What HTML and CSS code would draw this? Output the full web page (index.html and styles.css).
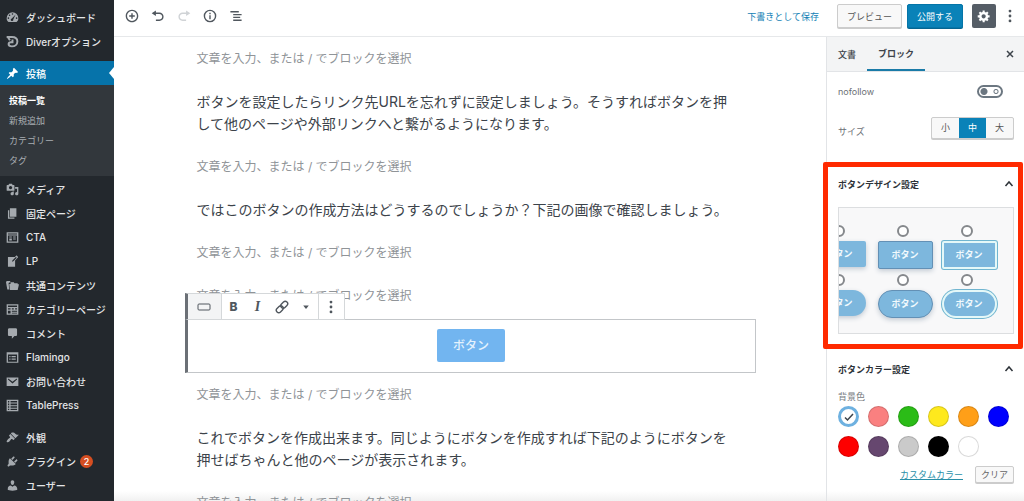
FILE: index.html
```html
<!DOCTYPE html>
<html lang="ja">
<head>
	<meta charset="UTF-8">
	<meta name="viewport" content="width=device-width, initial-scale=1">
	<title>投稿の編集</title>
	<link rel="stylesheet" href="styles.css">
</head>
<body>
	<nav class="sidebar">
		<ul class="menu">
			<li><a href="#"><svg viewBox="0 0 20 20"><path fill-rule="evenodd" d="M3.8 17C2.100 15.500 1 13.400 1 11a9 9 0 0 1 18 0c0 2.400-1.100 4.500-2.800 6zM10 3.500a1.200 1.200 0 1 0 0 2.400 1.200 1.200 0 0 0 0-2.400zM5.500 5.300a1.200 1.200 0 1 0 0 2.400 1.200 1.200 0 0 0 0-2.400zM3.700 9.800a1.200 1.200 0 1 0 0 2.400 1.200 1.200 0 0 0 0-2.400zM16.300 9.800a1.200 1.200 0 1 0 0 2.400 1.200 1.200 0 0 0 0-2.400zM14.800 5.500L9 11.500a2 2 0 1 0 2.200 1.500z"/></svg>ダッシュボード</a></li>
			<li><a href="#"><svg viewBox="0 0 20 20"><path class="line-thick" d="M1 3h8c5.500 0 8.500 2.500 8.500 7S14 17.500 9 17.500c-3 0-5-1.500-5-3.500s1.500-3 3.500-3H10V7M3 3.500l3 4.500"/></svg>Diverオプション</a></li>
		</ul>
		<ul class="menu">
			<li class="current"><a href="#"><svg viewBox="0 0 20 20"><path d="M10.440 3.020l1.820-1.820 6.360 6.350-1.830 1.820c-1.050-.68-2.480-.57-3.410.36l-.75.75c-.92.93-1.040 2.350-.35 3.410l-1.830 1.820-2.410-2.410-2.800 2.790c-.42.42-3.380 2.710-3.800 2.290s1.860-3.390 2.280-3.810l2.790-2.790L4.100 9.360l1.830-1.820c1.050.69 2.480.57 3.400-.36l.75-.75c.93-.92 1.050-2.350.36-3.410z"/></svg>投稿</a>
				<ul class="submenu">
					<li><a class="here" href="#">投稿一覧</a></li>
					<li><a href="#">新規追加</a></li>
					<li><a href="#">カテゴリー</a></li>
					<li><a href="#">タグ</a></li>
				</ul>
			</li>
			<li><a href="#"><svg viewBox="0 0 20 20"><path d="M13 11V4c0-.55-.45-1-1-1h-1.670L9 1H5L3.670 3H2c-.55 0-1 .45-1 1v7c0 .55.45 1 1 1h10c.55 0 1-.45 1-1zM7 4.500c1.380 0 2.500 1.120 2.500 2.500S8.380 9.500 7 9.500 4.500 8.380 4.500 7 5.620 4.500 7 4.500zM14 6h5v10.500c0 1.380-1.120 2.500-2.500 2.500S14 17.880 14 16.500s1.120-2.500 2.500-2.500c.17 0 .34.02.5.05V9h-3V6zm-4 8.050V13h2v3.500c0 1.380-1.120 2.500-2.500 2.500S7 17.880 7 16.500 8.120 14 9.500 14c.17 0 .34.02.5.05z"/></svg>メディア</a></li>
			<li><a href="#"><svg viewBox="0 0 20 20"><path d="M6 15V2h10v13H6zm-1 1h8v2H3V5h2v11z"/></svg>固定ページ</a></li>
			<li><a href="#"><svg viewBox="0 0 20 20"><path fill-rule="evenodd" d="M1 2h18v16H1zm2 2v1.500h14V4zm0 3v9h14V7zm2 1.500h4V10H5zm6 0h4V10h-4zM5 11.500h4v3H5zm6 0h4V13h-4z"/></svg>CTA</a></li>
			<li><a href="#"><svg viewBox="0 0 20 20"><path d="M16.890 1.200l1.410 1.410c.39.39.39 1.020 0 1.410L14 8.330V18H3V3h10.670l1.800-1.800c.4-.39 1.030-.4 1.420 0zm-5.660 8.480l5.370-5.360-1.420-1.420-5.360 5.370-.71 2.120z"/></svg>LP</a></li>
			<li><a href="#"><svg viewBox="0 0 20 20"><path d="M0 5l1-2h5l1 1.500L4 6l1 10H2zM5 7.500h2V5h5l1 1.500h5v1.500h2L18 17H6z"/></svg>共通コンテンツ</a></li>
			<li><a href="#"><svg viewBox="0 0 20 20"><path fill-rule="evenodd" d="M1 2h18v16H1zm2 2v2h14V4zm0 4v2h4V8zm6 0v2h3V8zm5 0v2h3V8zM3 12v4h4v-4zm6 0v1.500h8V12zm0 3v1h8v-1z"/></svg>カテゴリーページ</a></li>
			<li><a href="#"><svg viewBox="0 0 20 20"><path d="M5 2h10c1.100 0 2 .9 2 2v8c0 1.100-.9 2-2 2h-2l-4 4v-4H5c-1.100 0-2-.9-2-2V4c0-1.100.9-2 2-2z"/></svg>コメント</a></li>
			<li><a href="#"><svg viewBox="0 0 20 20"><path fill-rule="evenodd" d="M1 2h18v16H1zm2 3.500v11h14v-11zM5 7.500h2v2H5zm3.500 0H15v2H8.500zM5 11.500h2v2H5zm3.500 0H15v2H8.500z"/></svg>Flamingo</a></li>
			<li><a href="#"><svg viewBox="0 0 20 20"><path fill-rule="evenodd" d="M1 4h18v13H1zm2.500 1.500L3 7l7 6 7-6-.5-1.500L10 10.500z"/></svg>お問い合わせ</a></li>
			<li><a href="#"><svg viewBox="0 0 20 20"><path fill-rule="evenodd" d="M1 1h18v18H1zm2 2v2.500h2V3zm4 0v2.500h10V3zM3 7v2.500h2V7zm4 0v2.500h10V7zm-4 4v2.500h2V11zm4 0v2.500h10V11zm-4 4v2h2v-2zm4 0v2h10v-2z"/></svg>TablePress</a></li>
		</ul>
		<ul class="menu">
			<li><a href="#"><svg viewBox="0 0 20 20"><path d="M14.480 11.060L7.410 3.990l1.500-1.500c.5-.56 2.300-.47 3.510.32 1.210.8 1.430 1.280 2.910 2.100 1.180.64 2.450 1.260 4.450.85zm-.71.71L6.700 4.700 4.930 6.470c-.39.39-.39 1.020 0 1.410l1.060 1.060c.39.39.39 1.030 0 1.420-.6.6-1.430 1.110-2.210 1.690-.35.26-.7.53-1.010.84C1.430 14.230.4 16.080 1.400 17.070c.99 1 2.840-.03 4.180-1.360.31-.31.58-.66.85-1.020.57-.78 1.080-1.610 1.690-2.210.39-.39 1.020-.39 1.410 0l1.060 1.060c.39.39 1.020.39 1.410 0z"/></svg>外観</a></li>
			<li><a href="#"><svg viewBox="0 0 20 20"><path d="M13.110 4.360L9.870 7.600 8 5.730l3.240-3.240c.35-.34 1.050-.2 1.560.32.52.51.66 1.210.31 1.550zm-8 1.770l.91-1.120 9.010 9.010-1.190.84c-.71.71-2.630 1.160-3.820 1.160H6.140L4.900 17.260c-.59.59-1.540.59-2.120 0-.59-.58-.59-1.530 0-2.120l1.240-1.240v-3.880c0-1.130.4-3.190 1.090-3.890zm7.260 3.970l3.240-3.240c.34-.35 1.040-.21 1.550.31.52.51.66 1.210.31 1.550l-3.240 3.250z"/></svg>プラグイン<span class="count">2</span></a></li>
			<li><a href="#"><svg viewBox="0 0 20 20"><path d="M10 9.250c-2.270 0-2.730-3.440-2.730-3.440C7 4.020 7.820 2 9.970 2c2.160 0 2.980 2.020 2.710 3.810 0 0-.41 3.440-2.680 3.440zm0 2.570L12.720 10c2.390 0 4.520 2.330 4.520 4.530v2.490s-3.650 1.130-7.240 1.130c-3.650 0-7.240-1.130-7.240-1.130v-2.490c0-2.250 1.940-4.480 4.470-4.480z"/></svg>ユーザー</a></li>
		</ul>
	</nav>

	<div class="page">
		<header class="topbar">
			<div class="tools">
				<button type="button" aria-label="ブロックの追加"><svg viewBox="0 0 20 20"><path d="M10 1c-5 0-9 4-9 9s4 9 9 9 9-4 9-9-4-9-9-9zm0 16c-3.900 0-7-3.100-7-7s3.100-7 7-7 7 3.100 7 7-3.100 7-7 7zm1-11H9v3H6v2h3v3h2v-3h3V9h-3V6z"/></svg></button>
				<button type="button" aria-label="元に戻す"><svg viewBox="0 0 20 20"><path d="M12 5H7V2L1 6l6 4V7h5c2.200 0 4 1.800 4 4s-1.800 4-4 4H7v2h5c3.300 0 6-2.700 6-6s-2.700-6-6-6z"/></svg></button>
				<button type="button" aria-label="やり直す" disabled><svg viewBox="0 0 20 20"><path d="M8 5h5V2l6 4-6 4V7H8c-2.200 0-4 1.800-4 4s1.800 4 4 4h5v2H8c-3.300 0-6-2.700-6-6s2.700-6 6-6z"/></svg></button>
				<button type="button" aria-label="情報"><svg viewBox="0 0 20 20"><path fill-rule="evenodd" d="M10 1a9 9 0 1 0 0 18 9 9 0 0 0 0-18zm0 2a7 7 0 1 1 0 14 7 7 0 0 1 0-14zM9 5.500h2v2H9zM9 9h2v5.500H9z"/></svg></button>
				<button type="button" aria-label="ブロックナビゲーション"><svg viewBox="0 0 20 20"><path d="M2 3h12v2H2zM6 7h12v2H6zM6 11h10v2H6zM6 15h12v2H6z"/></svg></button>
			</div>
			<div class="actions">
				<a class="save" href="#">下書きとして保存</a>
				<button type="button" class="btn">プレビュー</button>
				<button type="button" class="btn primary">公開する</button>
				<button type="button" class="gear" aria-label="設定"><svg viewBox="0 0 20 20"><path d="M18 12h-2.180c-.17.7-.44 1.350-.81 1.930l1.540 1.540-2.100 2.100-1.540-1.540c-.58.36-1.230.63-1.910.79V19H8v-2.180c-.68-.16-1.330-.43-1.910-.79l-1.540 1.540-2.120-2.120 1.540-1.540c-.36-.58-.63-1.230-.79-1.910H1V9.030h2.170c.16-.7.44-1.350.8-1.940L2.430 5.550l2.100-2.100 1.540 1.540c.58-.37 1.240-.64 1.930-.81V2h3v2.180c.68.16 1.330.43 1.910.79l1.540-1.540 2.120 2.120-1.540 1.540c.36.59.64 1.240.8 1.940H18V12zm-8.500 1.500c1.660 0 3-1.340 3-3s-1.340-3-3-3-3 1.340-3 3 1.340 3 3 3z"/></svg></button>
				<button type="button" class="more" aria-label="ツールと設定"><svg viewBox="0 0 20 20"><circle cx="10" cy="3" r="2"/><circle cx="10" cy="10" r="2"/><circle cx="10" cy="17" r="2"/></svg></button>
			</div>
		</header>

		<div class="workspace">
			<main class="editor">
				<div class="blocks">
					<p class="prompt">文章を入力、または / でブロックを選択</p>
					<p>ボタンを設定したらリンク先URLを忘れずに設定しましょう。そうすればボタンを押して他のページや外部リンクへと繋がるようになります。</p>
					<p class="prompt">文章を入力、または / でブロックを選択</p>
					<p>ではこのボタンの作成方法はどうするのでしょうか？下記の画像で確認しましょう。</p>
					<p class="prompt">文章を入力、または / でブロックを選択</p>
					<p class="prompt">文章を入力、または / でブロックを選択</p>
					<div class="selected">
						<div class="block-toolbar">
							<button type="button" class="type" aria-label="ボタン"><svg viewBox="0 0 14 14"><rect class="line-thin" x="1" y="4" width="12" height="6" rx="1"/></svg></button>
							<div class="formats">
								<button type="button" class="bold">B</button>
								<button type="button" class="italic">I</button>
								<button type="button" aria-label="リンク"><svg viewBox="0 0 20 20"><g transform="rotate(-45 10 10)"><rect class="line" x="0" y="6.500" width="11" height="7" rx="3.500"/><rect class="line" x="9" y="6.500" width="11" height="7" rx="3.500"/></g></svg></button>
								<button type="button" aria-label="その他の書式"><svg viewBox="0 0 20 20"><path d="M6 8h8l-4 5z"/></svg></button>
							</div>
							<button type="button" class="options" aria-label="詳細設定"><svg viewBox="0 0 20 20"><circle cx="10" cy="3" r="2"/><circle cx="10" cy="10" r="2"/><circle cx="10" cy="17" r="2"/></svg></button>
						</div>
						<button type="button" class="cta">ボタン</button>
					</div>
					<p class="prompt">文章を入力、または / でブロックを選択</p>
					<p>これでボタンを作成出来ます。同じようにボタンを作成すれば下記のようにボタンを押せばちゃんと他のページが表示されます。</p>
					<p class="prompt">文章を入力、または / でブロックを選択</p>
				</div>
			</main>

			<aside class="panel">
				<div class="tabs">
					<button type="button">文書</button>
					<button type="button" class="active">ブロック</button>
					<button type="button" class="close" aria-label="閉じる"><svg viewBox="0 0 20 20"><path class="line-thick" d="M4 4l12 12M16 4L4 16"/></svg></button>
				</div>

				<section class="basics">
					<div class="field">
						<label for="nofollow">nofollow</label>
						<input type="checkbox" id="nofollow" class="toggle">
					</div>
					<div class="field">
						<span class="size-label" id="size">サイズ</span>
						<div class="sizes" role="group" aria-labelledby="size">
							<button type="button">小</button>
							<button type="button" class="active">中</button>
							<button type="button">大</button>
						</div>
					</div>
				</section>

				<section class="design">
					<button type="button" class="heading">ボタンデザイン設定<svg viewBox="0 0 20 20"><path class="line-thick" d="M3 14l7-8 7 8"/></svg></button>
					<div class="samples">
						<label><input type="radio" name="design"><span class="sample plain">ボタン</span></label>
						<label><input type="radio" name="design"><span class="sample edged">ボタン</span></label>
						<label><input type="radio" name="design"><span class="sample double">ボタン</span></label>
						<label><input type="radio" name="design"><span class="sample plain round">ボタン</span></label>
						<label><input type="radio" name="design"><span class="sample edged round">ボタン</span></label>
						<label><input type="radio" name="design"><span class="sample double round">ボタン</span></label>
					</div>
				</section>

				<section class="colors">
					<button type="button" class="heading">ボタンカラー設定<svg viewBox="0 0 20 20"><path class="line-thick" d="M3 14l7-8 7 8"/></svg></button>
					<div class="color-label">背景色</div>
					<div class="swatches">
						<button type="button" class="swatch chosen" aria-label="水色"><svg viewBox="0 0 20 20"><path class="line-thick" d="M2 11l5 5L18 4"/></svg></button>
						<button type="button" class="swatch pink" aria-label="ピンク"></button>
						<button type="button" class="swatch green" aria-label="緑"></button>
						<button type="button" class="swatch yellow" aria-label="黄"></button>
						<button type="button" class="swatch orange" aria-label="オレンジ"></button>
						<button type="button" class="swatch blue" aria-label="青"></button>
						<button type="button" class="swatch red" aria-label="赤"></button>
						<button type="button" class="swatch purple" aria-label="紫"></button>
						<button type="button" class="swatch gray" aria-label="グレー"></button>
						<button type="button" class="swatch black" aria-label="黒"></button>
						<button type="button" class="swatch white" aria-label="白"></button>
					</div>
					<div class="color-actions">
						<a href="#">カスタムカラー</a>
						<button type="button">クリア</button>
					</div>
				</section>
			</aside>
		</div>
	</div>
</body>
</html>
```

FILE: styles.css
```css
* {
	box-sizing: border-box;
}
body {
	display: flex;
	height: 100vh;
	margin: 0;
	overflow: hidden;
	background: #fff;
	color: #3c434a;
	font-family: Inter, "Noto Sans CJK JP", sans-serif;
	font-size: 9px;
}
ul, p {
	margin: 0;
	padding: 0;
	list-style: none;
}
button {
	display: flex;
	align-items: center;
	justify-content: center;
	margin: 0;
	padding: 0;
	border: 0;
	background: none;
	color: inherit;
	font: inherit;
}
svg {
	flex: none;
	width: 14px;
	height: 14px;
	fill: currentColor;
}
.line, .line-thin, .line-thick {
	fill: none;
	stroke: currentColor;
	stroke-width: 2;
}
.line-thin {
	stroke-width: 1;
}
.line-thick {
	stroke-width: 3;
}

/* admin menu */
.sidebar {
	flex: none;
	display: flex;
	flex-direction: column;
	gap: 8px;
	width: 114px;
	padding-top: 5px;
	overflow: hidden;
	background: #23282d;
	color: #e3e5e7;
	font-size: 10px;
	font-weight: 500;
}
.menu a {
	display: flex;
	align-items: center;
	gap: 7px;
	height: 24px;
	padding-left: 6px;
	color: inherit;
	text-decoration: none;
	white-space: nowrap;
}
.menu svg {
	width: 13px;
	height: 13px;
	color: #a5aaaf;
}
.menu .current > a {
	position: relative;
	background: #0673aa;
	color: #fff;
}
.current > a svg {
	color: #fff;
}
.current > a::after {
	content: "";
	position: absolute;
	right: 0;
	top: 6px;
	border: 6px solid transparent;
	border-left-width: 0;
	border-right: 5px solid #fff;
}
.menu .submenu {
	padding: 5px 0 6px;
	margin-bottom: 1px;
	background: #32373c;
	color: #a9aeb3;
	font-size: 9px;
	font-weight: 400;
}
.submenu a {
	height: 20px;
	padding-left: 9px;
}
.submenu .here {
	color: #fff;
	font-weight: 700;
}
.count {
	width: 13px;
	margin-left: -3px;
	border-radius: 50%;
	background: #d54e21;
	color: #fff;
	font-size: 9px;
	line-height: 13px;
	text-align: center;
}

/* top bar */
.page {
	flex: 1;
	display: flex;
	flex-direction: column;
	min-width: 0;
}
.topbar {
	display: flex;
	justify-content: space-between;
	height: 37px;
	padding: 4px 7px 8px 11px;
	border-bottom: 1px solid #e6e8ea;
}
.tools, .actions {
	display: flex;
	align-items: center;
}
.tools {
	gap: 12px;
	color: #50575e;
}
.tools button {
	height: 24px;
}
.tools button:disabled {
	color: #d0d3d6;
}
.save {
	margin-right: 18px;
	color: #1180b5;
	text-decoration: none;
}
.btn {
	height: 24px;
	padding: 0 9px;
	margin-right: 5px;
	border: 1px solid #ccc;
	border-radius: 2px;
	background: #f8f8f8;
	box-shadow: 0 1px 0 #ccc;
	color: #555;
}
.btn.primary {
	margin-right: 9px;
	border-color: #0575a8;
	background: #0a82b8;
	box-shadow: 0 1px 0 #056591;
	color: #fff;
}
.gear {
	width: 24px;
	height: 24px;
	margin-right: 7px;
	border-radius: 2px;
	background: #555d66;
	color: #fff;
}
.more {
	height: 24px;
	color: #50575e;
}

/* editor */
.workspace {
	flex: 1;
	display: flex;
	min-height: 0;
}
.editor {
	flex: 1;
	overflow: hidden;
	background: linear-gradient(to top, #f1f1f1, #fff 10px);
}
.blocks {
	display: flex;
	flex-direction: column;
	gap: 21px;
	max-width: 571px;
	margin: 0 auto;
	padding-top: 11px;
	font-size: 14px;
	line-height: 22px;
}
.blocks p {
	padding: 0 20px 0 12px;
}
.blocks .prompt {
	color: #909498;
	font-size: 12px;
}
.selected {
	position: relative;
	display: flex;
	justify-content: center;
	margin: -9px 0 -10px;
	padding: 9px 0 10px;
	border: 1px solid #c3c6c9;
	border-left: 3px solid #6b7076;
}
.cta {
	height: 33px;
	padding: 0 16px;
	border-radius: 2px;
	background: #72b5f0;
	color: #e4f2fd;
	font-size: 12px;
	font-weight: 500;
}
.block-toolbar {
	position: absolute;
	left: -3px;
	bottom: 100%;
	display: flex;
	height: 27px;
	border: 1px solid #d5d8da;
	border-left: 3px solid #6b7076;
	background: #fff;
	color: #50575e;
}
.type {
	width: 34px;
	border-right: 1px solid #d5d8da;
	background: #f3f4f5;
}
.formats {
	display: flex;
	border-right: 1px solid #d5d8da;
}
.formats button {
	width: 24px;
}
.bold {
	font-size: 12px;
	font-weight: 800;
}
.italic {
	font-family: "Liberation Serif", serif;
	font-size: 14px;
	font-style: italic;
	font-weight: 700;
}
.options {
	width: 25px;
}

/* settings panel */
.panel {
	flex: none;
	width: 198px;
	border-left: 1px solid #e2e4e7;
	background: linear-gradient(to top, #f1f1f1, #fff 10px);
}
.tabs {
	display: flex;
	height: 35px;
	border-bottom: 1px solid #e2e4e7;
	background: #f3f4f5;
	font-weight: 500;
}
.tabs button {
	padding: 0 11px;
}
.tabs .active {
	border-bottom: 2px solid #1a7ba8;
	font-weight: 700;
}
.tabs .close {
	margin-left: auto;
	padding-right: 9px;
}
.close svg, .heading svg {
	width: 10px;
	height: 10px;
}
.panel section {
	padding: 0 10px 0 11px;
}
.field {
	display: flex;
	align-items: center;
	justify-content: space-between;
	color: #6c7075;
}
.basics .field:first-child {
	height: 38px;
	padding-right: 11px;
}
.toggle {
	appearance: none;
	width: 26px;
	height: 13px;
	margin: 0;
	border: 2px solid #6c7781;
	border-radius: 7px;
	background:
		radial-gradient(circle at 5px 50%, #6c7781 3px, transparent 4px),
		radial-gradient(circle at 17px 50%, transparent 1px, #6c7781 2px, transparent 3px);
}
.basics .field:last-child {
	height: 35px;
}
.size-label {
	padding-top: 8px;
}
.sizes {
	display: flex;
	border: 1px solid #ccc;
	border-radius: 2px;
	background: #f8f8f8;
	box-shadow: 0 1px 0 #ccc;
}
.sizes button {
	width: 27px;
	height: 20px;
	color: #555;
}
.sizes .active {
	background: #0a82b8;
	color: #fff;
}
.heading {
	justify-content: space-between;
	width: 100%;
	height: 24px;
	color: #2d3238;
	font-weight: 700;
}
.panel .design {
	position: relative;
	padding-top: 27px;
}
/* red frame around the open section */
.design::after {
	content: "";
	position: absolute;
	inset: 17px 1px -15px -4px;
	border: 5px solid #ff2a00;
	border-radius: 2px;
	pointer-events: none;
}
.samples {
	display: grid;
	grid-template-columns: repeat(3, 64px);
	grid-auto-rows: 49px;
	justify-content: end;
	height: 127px;
	margin-top: 11px;
	padding: 17px 14px 0 0;
	overflow: hidden;
	border: 1px solid #dcdee0;
	background: #f8f8f9;
}
.samples label {
	display: flex;
	flex-direction: column;
	align-items: center;
	gap: 4px;
}
.samples input {
	appearance: none;
	width: 12px;
	height: 12px;
	margin: 0;
	border: 2px solid #85888c;
	border-radius: 50%;
	background: #fff;
}
.sample {
	width: 55px;
	height: 28px;
	margin-left: 4px;
	border-radius: 2px;
	background: #7db7dd;
	box-shadow: 0 2px 5px #c3cbd4;
	color: #f2fafd;
	font-size: 9px;
	font-weight: 700;
	line-height: 28px;
	text-align: center;
}
.plain {
	width: 53px;
	height: 26px;
	margin-left: 0;
	line-height: 26px;
}
.edged {
	border: 1px solid #6390b5;
	line-height: 26px;
}
.double {
	border: 2px solid #e5f8f8;
	box-shadow: 0 0 0 1px #70b5d0;
	line-height: 24px;
}
.round {
	border-radius: 14px;
}
.panel .colors {
	padding-top: 23px;
}
.color-label {
	margin-top: 9px;
	color: #777b80;
	line-height: 14px;
}
.swatches {
	display: flex;
	flex-wrap: wrap;
	gap: 9px;
	margin-top: 2px;
}
.swatch {
	width: 21px;
	height: 21px;
	border: 1px solid rgba(0, 0, 0, 0.15);
	border-radius: 50%;
}
.chosen {
	border: 3px solid #6eb1e0;
}
.chosen svg {
	width: 10px;
	height: 10px;
}
.pink {
	background: #fa8080;
}
.green {
	background: #2bbc17;
}
.yellow {
	background: #fee91d;
}
.orange {
	background: #ff9f18;
}
.blue {
	background: #0000fe;
}
.red {
	background: #fe0000;
}
.purple {
	background: #66476f;
}
.gray {
	background: #cacaca;
}
.black {
	background: #000;
}
.white {
	background: #fff;
}
.color-actions {
	display: flex;
	align-items: center;
	justify-content: flex-end;
	gap: 12px;
	margin-top: 9px;
}
.color-actions a {
	color: #2a8fa8;
}
.color-actions button {
	height: 17px;
	padding: 0 5px;
	border: 1px solid #ccc;
	border-radius: 2px;
	background: #f8f8f8;
	box-shadow: 0 1px 0 #ccc;
	color: #666;
}
```
